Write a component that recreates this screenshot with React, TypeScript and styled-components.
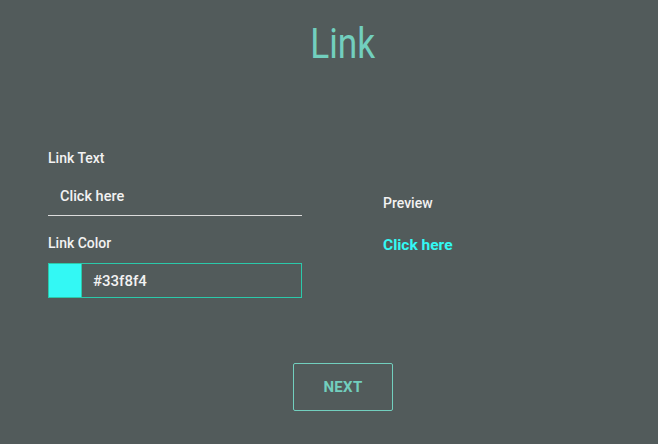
import React from 'react';
import styled, { createGlobalStyle } from 'styled-components';

const GlobalStyle = createGlobalStyle`
  * { box-sizing: border-box; }
  html, body {
    margin: 0;
    background: #525b5b;
    font-family: Roboto, "Liberation Sans", Arial, sans-serif;
  }
`;

const Page = styled.div`
  width: 658px;
  height: 444px;
  background: #525b5b;
  padding-left: 28px;
  display: flex;
  flex-direction: column;
  align-items: center;
`;

const Title = styled.h1`
  margin: 18px 0 0;
  font-size: 42px;
  font-weight: 400;
  color: #72cfbe;
  line-height: 52px;
  transform: scaleX(0.84);
`;

const Form = styled.div`
  align-self: stretch;
  margin: 80px 0 0 20px;
  display: grid;
  grid-template-columns: 254px auto;
  column-gap: 81px;
  align-items: center;
`;

const Column = styled.div`
  display: flex;
  flex-direction: column;
`;

const Label = styled.label`
  font-size: 14px;
  font-weight: 500;
  color: #f2f2f2;
  line-height: 16px;
`;

const TextInput = styled.input`
  margin: 14px 0 19px;
  height: 36px;
  width: 254px;
  background: transparent;
  border: none;
  border-bottom: 1px solid #dcdcdc;
  padding: 0 12px 2px;
  font-family: inherit;
  font-size: 14.5px;
  font-weight: 500;
  color: #f2f2f2;
  outline: none;
`;

const ColorField = styled.div`
  margin-top: 12px;
  height: 35px;
  width: 254px;
  padding: 1px;
  gap: 1px;
  display: flex;
  align-items: stretch;
  background: #2bc9aa;
`;

const Swatch = styled.div<{ $color: string }>`
  width: 32px;
  background: ${(p) => p.$color};
`;

const ColorValue = styled.span`
  flex: 1;
  display: flex;
  align-items: center;
  padding-left: 11px;
  background: #525b5b;
  font-size: 15px;
  font-weight: 500;
  color: #f2f2f2;
`;

const PreviewLink = styled.a<{ $color: string }>`
  margin-top: 25px;
  font-size: 15.5px;
  font-weight: 700;
  color: ${(p) => p.$color};
  text-decoration: none;
`;

const NextButton = styled.button`
  margin-top: 65px;
  width: 100px;
  height: 48px;
  background: transparent;
  border: 1px solid #72cfbe;
  border-radius: 2px;
  font-family: inherit;
  font-size: 15px;
  font-weight: 700;
  color: #72cfbe;
  letter-spacing: 0.3px;
`;

export default function App() {
  const color = '#33f8f4';
  return (
    <Page>
      <GlobalStyle />
      <Title>Link</Title>
      <Form>
        <Column>
          <Label>Link Text</Label>
          <TextInput defaultValue="Click here" />
          <Label>Link Color</Label>
          <ColorField>
            <Swatch $color={color} />
            <ColorValue>{color}</ColorValue>
          </ColorField>
        </Column>
        <Column>
          <Label>Preview</Label>
          <PreviewLink $color={color}>Click here</PreviewLink>
        </Column>
      </Form>
      <NextButton>NEXT</NextButton>
    </Page>
  );
}
